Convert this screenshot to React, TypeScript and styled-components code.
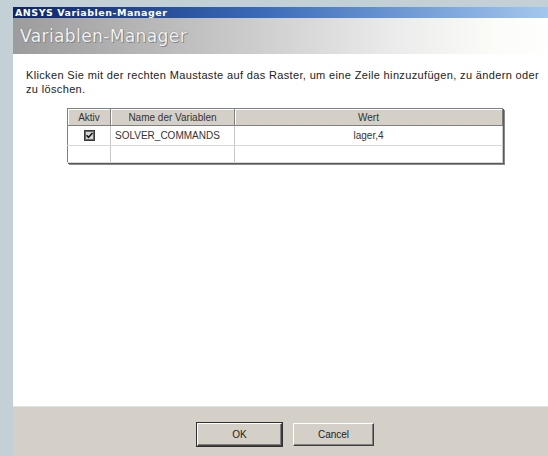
import styled, { createGlobalStyle } from 'styled-components';

const GlobalStyle = createGlobalStyle`
  html, body {
    margin: 0;
    padding: 0;
    background: #c3d1d7;
    overflow: hidden;
  }
  body {
    font-family: 'Liberation Sans', Arial, sans-serif;
  }
`;

const Desktop = styled.div`
  width: 548px;
  height: 456px;
  padding: 7px 0 0 13px;
  box-sizing: border-box;
  overflow: hidden;
`;

const Window = styled.div`
  width: 545px;
  height: 449px;
  display: flex;
  flex-direction: column;
  background: #ffffff;
`;

const TitleBar = styled.div`
  height: 11px;
  display: flex;
  align-items: center;
  justify-content: space-between;
  padding: 0 1px 0 2px;
  background: linear-gradient(to right, #0a246a 0%, #3a6ab8 45%, #a6caf0 100%);
`;

const TitleText = styled.span`
  font-family: 'DejaVu Sans', Verdana, sans-serif;
  font-size: 9.5px;
  font-weight: bold;
  color: #ffffff;
  letter-spacing: 0.5px;
  line-height: 11px;
`;

const CloseIcon = () => (
  <svg width="9" height="8" viewBox="0 0 9 8" style={{ display: 'block' }}>
    <rect width="9" height="8" fill="#d4d0c8" />
    <path d="M2 1.5 L7 6.5 M7 1.5 L2 6.5" stroke="#000" strokeWidth="1.4" />
  </svg>
);

const Banner = styled.div`
  height: 36px;
  display: flex;
  align-items: center;
  padding-left: 7px;
  background: linear-gradient(to right, #9c9c9c 0%, #c2c2c2 35%, #ebebeb 70%, #fbfbf8 88%, #ffffff 100%);
`;

const BannerTitle = styled.h1`
  margin: 0;
  font-family: 'DejaVu Sans', Verdana, sans-serif;
  font-size: 17px;
  font-weight: normal;
  letter-spacing: 0.4px;
  color: #f2f2f2;
  text-shadow: 0 0 1px #6a6a6a, 1px 1px 0 #8a8a8a;
`;

const Content = styled.div`
  flex: 1;
  padding: 14px 6px 0 13px;
  background: #ffffff;
`;

const Hint = styled.p`
  margin: 0;
  font-size: 11px;
  line-height: 14px;
  color: #222;
  letter-spacing: 0.35px;
`;

const Grid = styled.table`
  margin: 12px 0 0 41px;
  width: 436px;
  border-collapse: collapse;
  border: 1px solid #808080;
  box-shadow: 1px 1px 0 #5a5a5a, 2px 2px 0 #8a8a8a;
  font-size: 10px;
  color: #333;
  table-layout: fixed;
`;

const HeadCell = styled.th<{ $w?: number }>`
  width: ${p => (p.$w ? `${p.$w}px` : 'auto')};
  height: 16px;
  padding: 0;
  background: #d4d0c8;
  font-weight: normal;
  text-align: center;
  border-right: 1px solid #808080;
  border-bottom: 1px solid #808080;
  box-shadow: inset 1px 1px 0 #ffffff;
`;

const Cell = styled.td<{ $align?: string; $h?: number }>`
  height: ${p => p.$h ?? 19}px;
  padding: 0 0 0 ${p => (p.$align === 'left' ? 4 : 0)}px;
  text-align: ${p => p.$align ?? 'center'};
  border-right: 1px solid #c8c8c8;
  border-bottom: 1px solid #d8d8d8;
  background: #ffffff;
`;

const CheckBox = () => (
  <svg width="11" height="11" viewBox="0 0 11 11" style={{ display: 'block', margin: '0 auto' }}>
    <rect x="0.5" y="0.5" width="10" height="10" fill="#d8d8d8" stroke="#3a3a3a" />
    <rect x="1.5" y="1.5" width="8" height="8" fill="none" stroke="#6a6a6a" />
    <path d="M2.5 5.2 L4.5 7.4 L8.5 3" fill="none" stroke="#1a1a1a" strokeWidth="1.6" />
  </svg>
);

const Footer = styled.div`
  height: 50px;
  display: flex;
  justify-content: center;
  align-items: flex-start;
  gap: 11px;
  padding-top: 16px;
  box-sizing: border-box;
  background: #d4d0c8;
  border-top: 1px solid #e4e2dc;
`;

const Button = styled.button<{ $default?: boolean }>`
  width: ${p => (p.$default ? 85 : 81)}px;
  height: 23px;
  padding: 0;
  font-family: 'Liberation Sans', Arial, sans-serif;
  font-size: 10px;
  color: #222;
  background: #d4d0c8;
  border: 1px solid;
  border-color: #ffffff #404040 #404040 #ffffff;
  box-shadow: ${p =>
    p.$default
      ? '0 0 0 1px #303030, inset -1px -1px 0 #808080'
      : 'inset -1px -1px 0 #808080'};
`;

export default function App() {
  return (
    <Desktop>
      <GlobalStyle />
      <Window>
        <TitleBar>
          <TitleText>ANSYS Variablen-Manager</TitleText>
          <CloseIcon />
        </TitleBar>
        <Banner>
          <BannerTitle>Variablen-Manager</BannerTitle>
        </Banner>
        <Content>
          <Hint>
            Klicken Sie mit der rechten Maustaste auf das Raster, um eine Zeile hinzuzufügen, zu ändern oder
            zu löschen.
          </Hint>
          <Grid>
            <thead>
              <tr>
                <HeadCell $w={42}>Aktiv</HeadCell>
                <HeadCell $w={123}>Name der Variablen</HeadCell>
                <HeadCell>Wert</HeadCell>
              </tr>
            </thead>
            <tbody>
              <tr>
                <Cell>
                  <CheckBox />
                </Cell>
                <Cell $align="left">SOLVER_COMMANDS</Cell>
                <Cell>lager,4</Cell>
              </tr>
              <tr>
                <Cell $h={16} />
                <Cell $h={16} />
                <Cell $h={16} />
              </tr>
            </tbody>
          </Grid>
        </Content>
        <Footer>
          <Button $default>OK</Button>
          <Button>Cancel</Button>
        </Footer>
      </Window>
    </Desktop>
  );
}
